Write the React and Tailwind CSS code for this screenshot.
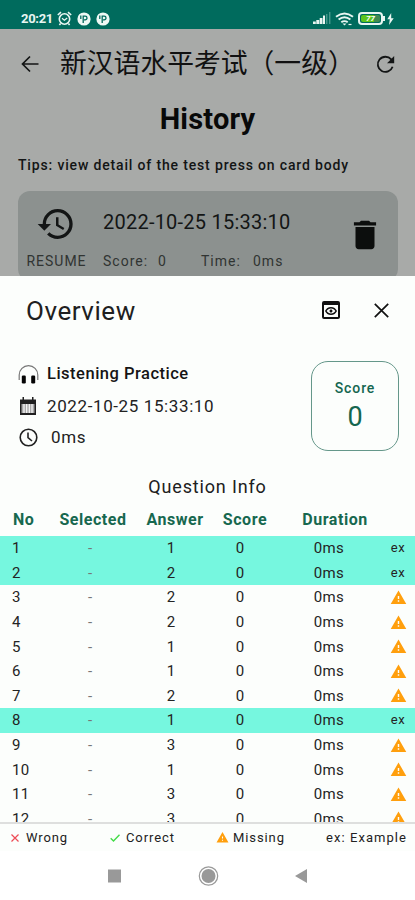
import React from "react";
import { MdHistory, MdDelete, MdOutlinePreview, MdWarning } from "react-icons/md";

const rows = [
  { no: 1, answer: 1, example: true },
  { no: 2, answer: 2, example: true },
  { no: 3, answer: 2 },
  { no: 4, answer: 2 },
  { no: 5, answer: 1 },
  { no: 6, answer: 1 },
  { no: 7, answer: 2 },
  { no: 8, answer: 1, example: true },
  { no: 9, answer: 3 },
  { no: 10, answer: 1 },
  { no: 11, answer: 3 },
  { no: 12, answer: 3 },
];

function ParkingBadge() {
  return (
    <svg className="h-[14px] w-[14px]" viewBox="0 0 14 14">
      <circle cx="7" cy="7" r="6.6" fill="#eef9f5" />
      <path d="M6.2 11V3.500M6.200 4.200h2a1.800 1.800 0 0 1 0 3.600H7M3.800 3.500v3.500" fill="none" stroke="#00695c" strokeWidth="1.300" />
    </svg>
  );
}

function StatusBar() {
  return (
    <div className="flex h-[29px] shrink-0 items-center bg-[#006b5d] pl-[21px] pt-[8px] text-[#e8f6f2]">
      <span className="w-[36px] whitespace-nowrap text-[13px] font-bold leading-none tracking-[-0.300px]">20:21</span>
      <svg className="h-[15px] w-[15px]" viewBox="0 0 15 15" fill="none" stroke="currentColor" strokeWidth="1.6">
        <circle cx="7.5" cy="8" r="5.2" />
        <path d="M.8 4 4 1.2M14.2 4 11 1.2M3.6 12.5 2.4 14M11.4 12.5l1.2 1.5" />
        <path d="M5 7.2l2.4 2L10.2 7" strokeWidth="1.3" />
      </svg>
      <span className="ml-[5px] flex gap-[5px]"><ParkingBadge /><ParkingBadge /></span>
      <div className="ml-auto flex items-center pr-[21px]">
        <svg className="h-[13px] w-[19px]" viewBox="0 0 19 13">
          <path d="M1 9.5h2.8V12H1zM4.3 8H7.200v4H4.300zM7.700 6h2.800v6H7.700zM11 3.500h2V12h-2z" fill="currentColor" />
          <path d="M14.800 2v10M17.800 0v12" stroke="#66aaa0" strokeWidth="1" />
        </svg>
        <svg className="ml-[4px] h-[14px] w-[19px]" viewBox="0 0 19 14" fill="none" stroke="currentColor" strokeWidth="1.900">
          <path d="M1 4.800q8.500-6.700 17 0M3.600 7.600q5.900-4.700 11.800 0M6.300 10.300q3.200-2.400 6.400 0" />
          <path d="M7.500 11.400h4l-2 2z" fill="currentColor" stroke="none" />
          <path d="M13.500 12.500h3" strokeWidth="1.200" />
        </svg>
        <div className="ml-[4px] flex h-[13px] w-[25px] items-center rounded-[4px] border-2 border-current p-px">
          <div className="flex h-full w-full items-center justify-center rounded-[2px] bg-linear-to-r from-[#5cc51c] from-70% to-[#3f8a50] to-70% text-[8px] font-bold italic leading-none text-white">77</div>
        </div>
        <div className="h-[5px] w-[2px] bg-current" />
        <svg className="ml-[2px] h-[12px] w-[7px]" viewBox="0 0 7 12"><path d="M4.200 0 .3 6.300h2.500L2 12l4.700-6.800H4.200z" fill="currentColor" /></svg>
      </div>
    </div>
  );
}

function Background() {
  return (
    <div className="h-[247px] shrink-0 overflow-hidden bg-[#a8aaa8] text-[#131515]">
      <div className="flex h-[70px] items-center pl-[21px] pr-[20px]">
        <svg className="h-[18px] w-[18px]" viewBox="0 0 18 18" fill="none" stroke="currentColor" strokeWidth="1.700"><path d="M17.500 9H1.500M9 1.500 1.500 9 9 16.500" /></svg>
        <h1 className="mb-[3px] ml-[21px] whitespace-nowrap font-['Noto_Sans_CJK_SC',sans-serif] text-[26.800px] font-normal leading-none text-[#111]">新汉语水平考试（一级）</h1>
        <svg className="ml-auto h-[19px] w-[19px] shrink-0" viewBox="0 0 19 19">
          <path d="M16.600 11.800A7.600 7.600 0 1 1 15.200 4.400L17 6.500" fill="none" stroke="currentColor" strokeWidth="1.800" />
          <path d="M18.200 1v7.200H11z" fill="currentColor" />
        </svg>
      </div>
      <h2 className="h-[41px] text-center text-[29px] font-bold leading-[41px] tracking-[0.200px] text-[#080909]">History</h2>
      <p className="mt-[14px] h-[22px] whitespace-nowrap pl-[18px] text-[14px] font-medium leading-[22px] tracking-[0.840px]">Tips: view detail of the test press on card body</p>
      <div className="ml-[18px] mr-[17px] mt-[15px] flex h-[90px] rounded-[12px] bg-[#8c918f]">
        <div className="flex w-[77px] flex-col items-center pt-[13px]">
          <MdHistory className="mr-[1px] h-[40px] w-[40px]" />
          <span className="mt-[6px] text-[14px] leading-[22px] tracking-[1px] text-[#303432]">RESUME</span>
        </div>
        <div className="w-[246px] pl-[8px] pt-[17px]">
          <div className="whitespace-nowrap text-[20px] leading-[28px] tracking-[0.230px]">2022-10-25 15:33:10</div>
          <div className="mt-[14px] flex text-[14px] leading-[22px] tracking-[1px] text-[#303432]">
            <span className="w-[55px]">Score:</span><span className="w-[43px]">0</span>
            <span className="w-[52px]">Time:</span><span>0ms</span>
          </div>
        </div>
        <MdDelete className="ml-[5px] mt-[25px] h-[38px] w-[38px] shrink-0 text-[#0c0e0d]" />
      </div>
    </div>
  );
}

function Summary() {
  return (
    <section className="flex h-[126px] shrink-0 pl-[18px]">
      <div className="flex w-[293px] flex-col pt-[13px] text-[17px] text-[#222]">
        <div className="flex h-[31.600px] items-center">
          <svg className="h-[20px] w-[21px]" viewBox="0 0 21 20">
            <path d="M1.200 15V10a9.200 9.200 0 0 1 18.600 0v5" fill="none" stroke="#777" strokeWidth="1.200" />
            <rect x="3.800" y="10.500" width="4" height="8" rx="1.200" fill="#050505" /><rect x="13.200" y="10.500" width="4" height="8" rx="1.200" fill="#050505" />
          </svg>
          <span className="ml-[8px] whitespace-nowrap text-[16.500px] font-medium tracking-[0.5px] text-[#151515]">Listening Practice</span>
        </div>
        <div className="flex h-[31.600px] items-center">
          <svg className="ml-[2px] h-[18px] w-[16px]" viewBox="0 0 16 18">
            <path d="M0 2.500h2.500V0H4v2.500h8V0h1.500v2.500H16V18H0z" fill="#202020" />
            <path d="M1.500 7h13v9h-13z" fill="#aaa" />
            <path d="M4 7v9M6.700 7v9M9.300 7v9M12 7v9" stroke="#fff" strokeWidth="1.100" />
          </svg>
          <span className="ml-[11px] whitespace-nowrap tracking-[0.610px]">2022-10-25 15:33:10</span>
        </div>
        <div className="flex h-[31.600px] items-center">
          <svg className="ml-px h-[19px] w-[19px]" viewBox="0 0 19 19" fill="none" stroke="#222" strokeWidth="1.600"><circle cx="9.500" cy="9.500" r="8.300" /><path d="M9 4.500v5.200l4 3.300" /></svg>
          <span className="ml-[13px] tracking-[0.700px]">0ms</span>
        </div>
      </div>
      <div className="mt-[15px] flex h-[90px] w-[88px] flex-col items-center rounded-[17px] border border-[#65978a] pt-[14px] text-[#14664f]">
        <span className="text-[14px] font-medium leading-[24px] tracking-[0.900px]">Score</span>
        <span className="text-[27px] leading-[34px]">0</span>
      </div>
    </section>
  );
}

export default function App() {
  return (
    <main className="flex h-[900px] w-[415px] flex-col overflow-hidden bg-[#fcfefc] font-[Roboto,sans-serif]">
      <StatusBar />
      <Background />
      <header className="flex h-[70px] shrink-0 items-center pl-[26px] pr-[26px] text-[#202020]">
        <h2 className="whitespace-nowrap text-[26px] font-normal leading-none tracking-[0.550px]">Overview</h2>
        <MdOutlinePreview className="mb-[2px] ml-auto h-[24px] w-[24px] text-[#111]" />
        <svg className="mb-[2px] ml-[31px] h-[15px] w-[15px]" viewBox="0 0 15 15" fill="none" stroke="#111" strokeWidth="1.700"><path d="m.8.8 13.400 13.400M14.200.8.8 14.200" /></svg>
      </header>
      <Summary />
      <h3 className="h-[32px] shrink-0 text-center text-[18px] leading-[30px] tracking-[0.850px] text-[#202020]">Question Info</h3>
      <div className="grid h-[32px] shrink-0 grid-cols-[53px_80px_84px_56px_124px] items-center text-center text-[16px] font-bold leading-[32px] tracking-[0.550px] text-[#17684f]">
        <span className="pl-[13px] text-left">No</span><span>Selected</span><span>Answer</span><span>Score</span><span>Duration</span>
      </div>
      <div className="h-[286px] shrink-0 overflow-hidden text-[15px] text-[#242424]">
        {rows.map((row) => (
          <div key={row.no} className={`grid h-[24.600px] grid-cols-[50px_80px_82px_56px_122px_16px] items-center text-center leading-[24px] ${row.example ? "bg-[#76f7df]" : ""}`}>
            <span className="pl-[12px] text-left tracking-[0.300px]">{row.no}</span>
            <span className="text-[#777]">-</span>
            <span>{row.answer}</span>
            <span>0</span>
            <span className="tracking-[0.400px]">0ms</span>
            <span className="flex justify-center text-[13px] tracking-[0.500px]">
              {row.example ? "ex" : <MdWarning className="h-[17px] w-[17px] shrink-0 text-[#ff9f0d]" />}
            </span>
          </div>
        ))}
      </div>
      <footer className="flex h-[29px] shrink-0 items-center border-t-2 border-[#dedfde] text-[13px] tracking-[0.900px] text-[#222]">
        <span className="flex w-[110px] items-center pl-[11px]">
          <svg className="mr-[7px] h-[8px] w-[8px]" viewBox="0 0 8 8"><path d="m.5.5 7 7M7.500.5l-7 7" stroke="#ee4b55" strokeWidth="1.200" /></svg>Wrong
        </span>
        <span className="flex w-[106px] items-center">
          <svg className="mr-[6px] h-[8px] w-[10px]" viewBox="0 0 10 8"><path d="M.7 4.300 3.500 7 9.500.8" fill="none" stroke="#43dc48" strokeWidth="1.400" /></svg>Correct
        </span>
        <span className="flex items-center"><MdWarning className="mr-[4px] h-[13px] w-[13px] text-[#ff9f0d]" />Missing</span>
        <span className="ml-auto pr-[8px] tracking-[1.050px]">ex: Example</span>
      </footer>
      <nav className="flex flex-1 justify-center bg-white pt-[14px]">
        <svg className="h-[22px] w-[200px]" viewBox="0 0 200 22">
          <path d="M0 4.500h13v13H0z" fill="#999" />
          <circle cx="100.500" cy="11" r="9.200" fill="none" stroke="#999" strokeWidth="1.200" /><circle cx="100.500" cy="11" r="7" fill="#999" />
          <path d="M187 11 199 4v14z" fill="#999" />
        </svg>
      </nav>
    </main>
  );
}
